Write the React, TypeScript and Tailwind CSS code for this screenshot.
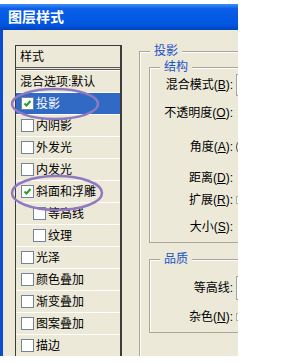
import React from "react";

type Row = { label: string; box?: boolean; checked?: boolean; indent?: boolean; selected?: boolean };

const rows: Row[] = [
    { label: "混合选项:默认" },
    { label: "投影", box: true, checked: true, selected: true },
    { label: "内阴影", box: true },
    { label: "外发光", box: true },
    { label: "内发光", box: true },
    { label: "斜面和浮雕", box: true, checked: true },
    { label: "等高线", box: true, indent: true },
    { label: "纹理", box: true, indent: true },
    { label: "光泽", box: true },
    { label: "颜色叠加", box: true },
    { label: "渐变叠加", box: true },
    { label: "图案叠加", box: true },
    { label: "描边", box: true },
];

function CheckBox({ checked }: { checked?: boolean }) {
    return (
        <span className="flex h-[13px] w-[13px] shrink-0 items-center justify-center border border-[#71849a] bg-white">
            {checked && (
                <svg width="9" height="9" viewBox="0 0 9 9">
                    <path d="M1.5 4.5 L3.5 6.5 L7.5 2" fill="none" stroke="#21a121" strokeWidth="2" />
                </svg>
            )}
        </span>
    );
}

function Label({ text, hot }: { text: string; hot?: string }) {
    return (
        <span>
            {text}
            {hot && (
                <>
                    (<u>{hot}</u>)
                </>
            )}
            :
        </span>
    );
}

function FieldRow({ mt, children, control }: { mt: string; children: React.ReactNode; control?: React.ReactNode }) {
    return (
        <div className={`flex h-[20px] items-center ${mt}`}>
            <div className="w-[83px] shrink-0 text-right">{children}</div>
            <div className="ml-[3px]">{control}</div>
        </div>
    );
}

export default function App() {
    return (
        <div
            className="relative h-[363px] w-[281px] overflow-hidden bg-white text-[12px] text-black"
            style={{ fontFamily: '"Liberation Sans", "Noto Sans CJK SC", sans-serif' }}
        >
            <div className="mt-[4px] w-[238px] overflow-hidden">
                <div className="flex h-[26px] items-center bg-[linear-gradient(to_bottom,#3f8ef6_0%,#0b5fe8_18%,#0056e0_80%,#0043bc_100%)] pl-[8px] text-[14px] font-bold text-white">
                    图层样式
                </div>

                <div className="flex h-[326px] border-l-[3px] border-[#0b4cd3] bg-[#ece9d8] pl-[12px] pt-[15px]">
                    {/* style list */}
                    <div className="w-[107px] shrink-0 border-l border-r-2 border-t border-[#3c3c3c]">
                        <div className="flex h-[24px] items-center border-b-[3px] border-double border-[#555] pl-[4px]">
                            样式
                        </div>
                        {rows.map((r) => (
                            <div
                                key={r.label}
                                className={`flex h-[22px] items-center gap-[2px] border-t border-white ${
                                    r.selected ? "bg-[#316ac5] text-white" : ""
                                } ${r.box ? (r.indent ? "pl-[17px]" : "pl-[5px]") : "pl-[4px]"}`}
                            >
                                {r.box && <CheckBox checked={r.checked} />}
                                <span className="whitespace-nowrap">{r.label}</span>
                            </div>
                        ))}
                    </div>

                    {/* settings panel */}
                    <div className="ml-[17px] mt-[6px] h-[305px] w-[140px] shrink-0 border-l border-t border-[#a8a799] shadow-[inset_1px_1px_0_#fff]">
                        <div className="-mt-[8px] ml-[10px] w-fit bg-[#ece9d8] px-[4px] leading-[15px] text-[#1a51c8]">投影</div>

                        <div className="ml-[9px] mt-[8px] h-[176px] border-b border-l border-t border-[#a8a799] shadow-[inset_1px_1px_0_#fff]">
                            <div className="-mt-[8px] ml-[10px] w-fit bg-[#ece9d8] px-[4px] leading-[15px] text-[#1a51c8]">结构</div>
                            <FieldRow
                                mt="mt-0"
                                control={<div className="h-[22px] w-[30px] border border-[#a5a5a5] bg-white" />}
                            >
                                <Label text="混合模式" hot="B" />
                            </FieldRow>
                            <FieldRow mt="mt-[8px]">
                                <Label text="不透明度" hot="O" />
                            </FieldRow>
                            <FieldRow
                                mt="mt-[14px]"
                                control={<div className="h-[18px] w-[18px] rounded-full border border-[#444] bg-white" />}
                            >
                                <Label text="角度" hot="A" />
                            </FieldRow>
                            <FieldRow mt="mt-[11px]">
                                <Label text="距离" hot="D" />
                            </FieldRow>
                            <FieldRow mt="mt-[2px]" control={<div className="h-[8px] w-[6px] border border-[#9fb79a] bg-white" />}>
                                <Label text="扩展" hot="R" />
                            </FieldRow>
                            <FieldRow mt="mt-[7px]">
                                <Label text="大小" hot="S" />
                            </FieldRow>
                        </div>

                        <div className="ml-[9px] mt-[16px] h-[74px] border-b border-l border-t border-[#a8a799] shadow-[inset_1px_1px_0_#fff]">
                            <div className="-mt-[8px] ml-[10px] w-fit bg-[#ece9d8] px-[4px] leading-[15px] text-[#1a51c8]">品质</div>
                            <FieldRow
                                mt="mt-[11px]"
                                control={<div className="h-[24px] w-[30px] border border-[#a5a5a5] bg-white" />}
                            >
                                <Label text="等高线" />
                            </FieldRow>
                            <FieldRow mt="mt-[9px]" control={<div className="h-[8px] w-[6px] border border-[#9fb79a] bg-white" />}>
                                <Label text="杂色" hot="N" />
                            </FieldRow>
                        </div>
                    </div>
                </div>
            </div>

            {/* hand-drawn highlight marks */}
            <svg className="pointer-events-none absolute inset-0" width="281" height="363">
                <ellipse cx="55" cy="104" rx="43" ry="15" fill="none" stroke="#9079bf" strokeWidth="2.5" />
                <ellipse cx="57" cy="193" rx="45" ry="17" fill="none" stroke="#9079bf" strokeWidth="2.5" />
            </svg>
        </div>
    );
}
